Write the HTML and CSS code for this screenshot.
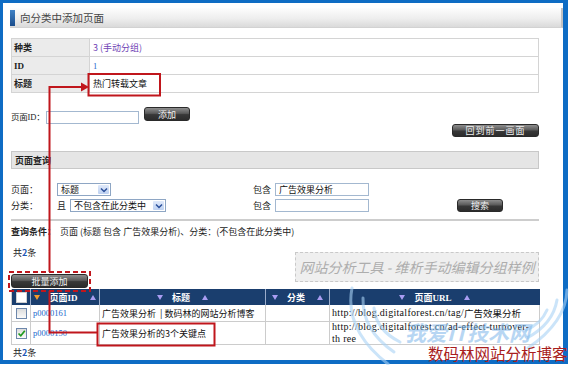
FILE: index.html
```html
<!DOCTYPE html>
<html lang="zh-CN">
<head>
<meta charset="utf-8">
<title>向分类中添加页面</title>
<link rel="stylesheet" href="styles.css">
</head>
<body>
<div class="frame">
  <div class="head"><span class="accent"></span><span class="head-title">向分类中添加页面</span></div>
  <div class="content">
    <div class="info">
      <div class="irow"><div class="lab">种类</div><div class="val purple">3 (手动分组)</div></div>
      <div class="irow"><div class="lab">ID</div><div class="val"><span class="link">1</span></div></div>
      <div class="irow"><div class="lab">标题</div><div class="val dark">热门转载文章</div></div>
    </div>

    <div class="idrow">
      <span class="idlabel">页面ID：</span>
      <span class="input idinput"></span>
      <span class="btn b-add">添加</span>
    </div>
    <div class="backrow"><span class="btn b-back">回到前一画面</span></div>

    <div class="section">页面查询</div>

    <div class="form">
      <span class="flabel">页面：</span>
      <span class="fcell"><span class="sel s1"><span class="seltext">标题</span><span class="arr"><svg width="8" height="6" viewBox="0 0 8 6"><path d="M1 1.5 L4 4.5 L7 1.5" fill="none" stroke="#2a4f9a" stroke-width="1.5"/></svg></span></span></span>
      <span class="flabel">包含</span>
      <span class="input"><span class="intext">广告效果分析</span></span>
      <span></span>
      <span></span>

      <span class="flabel">分类：</span>
      <span class="fcell"><span class="qie">且</span><span class="sel s2"><span class="seltext">不包含在此分类中</span><span class="arr"><svg width="8" height="6" viewBox="0 0 8 6"><path d="M1 1.5 L4 4.5 L7 1.5" fill="none" stroke="#2a4f9a" stroke-width="1.5"/></svg></span></span></span>
      <span class="flabel">包含</span>
      <span class="input"></span>
      <span></span>
      <span class="btn b-search">搜索</span>
    </div>

    <div class="sep"></div>

    <div class="cond"><b>查询条件：</b>&nbsp; 页面 (标题 包含 广告效果分析)、分类：(不包含在此分类中)</div>

    <div class="countrow">
      <div class="leftcol">
        <div class="count">共<b>2</b>条</div>
        <span class="btn b-bulk">批量添加</span>
      </div>
      <div class="sample">网站分析工具 - 维析手动编辑分组样例</div>
    </div>

    <div class="list">
      <div class="hc"><span class="cb white"></span></div>
      <div class="hc"><span class="g"><span class="dn org"></span><span>页面ID</span><span class="up"></span></span></div>
      <div class="hc"><span class="g"><span class="dn"></span><span>标题</span><span class="up"></span></span></div>
      <div class="hc"><span class="g"><span class="dn"></span><span>分类</span><span class="up"></span></span></div>
      <div class="hc last"><span class="g"><span class="dn"></span><span>页面URL</span><span class="up"></span></span></div>

      <div class="bc c"><span class="cb"></span></div>
      <div class="bc"><span class="link">p0000161</span></div>
      <div class="bc">广告效果分析 &nbsp;| 数码林的网站分析博客</div>
      <div class="bc"></div>
      <div class="bc url">http://blog.digitalforest.cn/tag/<span class="cjk">广告效果分析</span></div>

      <div class="bc c"><span class="cb checked"><svg width="9" height="9" viewBox="0 0 9 9"><path d="M1.5 4.5 L3.8 6.8 L7.8 1.8" fill="none" stroke="#1f9a1f" stroke-width="1.7"/></svg></span></div>
      <div class="bc"><span class="link">p0000150</span></div>
      <div class="bc">广告效果分析的3个关键点</div>
      <div class="bc"></div>
      <div class="bc url two">http://blog.digitalforest.cn/ad-effect-turnover-<br>th ree</div>
    </div>

    <div class="count bottom">共<b>2</b>条</div>
  </div>
</div>

<svg class="overlay" width="572" height="365" viewBox="0 0 572 365">
  <g fill="none" stroke="#a9d3f6" stroke-width="3" stroke-linecap="round" opacity="0.6">
    <path d="M352 288 Q344 330 388 364"/>
    <path d="M363 298 Q362 330 394 352"/>
    <path d="M374 308 Q376 330 400 342"/>
    <path d="M567 290 Q566 322 528 348"/>
    <path d="M557 300 Q553 324 527 338"/>
    <path d="M547 310 Q541 324 526 330"/>
  </g>
  <text x="405" y="341" class="wm-blue">我爱IT技术网</text>
  <g fill="none" stroke="#c0161c" stroke-width="2">
    <path d="M49.5 272 V87 H82"/>
    <path d="M49.5 291 V332.5 H97"/>
    <rect x="88.5" y="74" width="71.5" height="21.5"/>
    <rect x="97.5" y="323.5" width="117" height="22"/>
    <rect x="9" y="272" width="81" height="19" stroke-dasharray="5 3"/>
  </g>
  <polygon points="81,82.5 89,87 81,91.5" fill="#c0161c"/>
  <text x="428" y="360" class="wm-red">数码林网站分析博客</text>
</svg>
</body>
</html>
```

FILE: styles.css
```css
html, body {
  margin: 0;
  padding: 0;
}
body {
  width: 572px;
  height: 365px;
  overflow: hidden;
  background: #fff;
  position: relative;
  font-family: "Noto Sans CJK SC", "Liberation Sans", sans-serif;
  font-size: 9px;
  color: #222;
}

.frame {
  width: 560px;
  height: 357px;
  border: 3px solid #0e6cc4;
  border-right-width: 5px;
  border-bottom-width: 4px;
}

.head {
  margin: 5px 0 0 7px;
  height: 19px;
  background: linear-gradient(#fdfdfd, #eeeeee 55%, #dadada);
  border-bottom: 1px solid #d2d2d2;
  border-right: 2px solid #c2c2c2;
  display: flex;
  align-items: center;
}
.accent {
  width: 5px;
  height: 16px;
  background: linear-gradient(#3f82c6, #1b4d8c);
  margin-right: 5px;
}
.head-title {
  font-size: 10.5px;
  line-height: 12px;
  color: #444;
}

.content {
  margin-left: 8px;
  width: 528px;
}

/* info table */
.info {
  margin-top: 10px;
  border: 1px solid #d4d4d4;
  border-bottom: none;
}
.irow {
  display: grid;
  grid-template-columns: 78px 1fr;
  height: 18px;
  box-sizing: border-box;
  border-bottom: 1px solid #d4d4d4;
}
.lab {
  background: #ebebeb;
  border-right: 1px solid #d4d4d4;
  font-weight: bold;
  padding-left: 2px;
  display: flex;
  align-items: center;
  color: #222;
  font-family: "Liberation Serif", "Noto Sans CJK SC", serif;
}
.val {
  padding-left: 3px;
  display: flex;
  align-items: center;
}
.purple { color: #6f43b5; }
.dark { color: #111; }
.link {
  color: #2166cc;
  font-family: "Liberation Serif", serif;
  font-size: 8.5px;
}

/* page id row */
.idrow {
  margin-top: 14px;
  height: 17px;
  display: flex;
  align-items: flex-start;
}
.idlabel {
  width: 35px;
  flex-shrink: 0;
  white-space: nowrap;
  margin-top: 4px;
  line-height: 12px;
  font-size: 8.5px;
  letter-spacing: -0.2px;
  font-family: "Liberation Serif", "Noto Sans CJK SC", serif;
}
.input {
  box-sizing: border-box;
  height: 13px;
  border: 1px solid #a3b8d0;
  background: #fff;
  display: flex;
  align-items: center;
}
.idinput {
  width: 93px;
  flex-shrink: 0;
  margin-top: 4px;
}
.intext {
  padding-left: 3px;
  line-height: 11px;
  color: #111;
}

.btn {
  box-sizing: border-box;
  display: flex;
  align-items: center;
  justify-content: center;
  color: #f2f2f2;
  font-size: 9px;
  border-radius: 3px;
  border: 1px solid #2a2a2a;
  background: linear-gradient(#8e8e8e, #5a5a5a 45%, #383838 55%, #2c2c2c);
}
.b-add {
  width: 46px;
  height: 14px;
  margin-left: 5px;
}
.backrow {
  display: flex;
  justify-content: flex-end;
}
.b-back {
  width: 87px;
  height: 13px;
  letter-spacing: 1px;
}

.section {
  margin-top: 14px;
  height: 18px;
  box-sizing: border-box;
  border: 1px solid #c8c8c8;
  background: #e5e5e5;
  font-weight: bold;
  padding-left: 3px;
  display: flex;
  align-items: center;
  color: #222;
}

/* form */
.form {
  margin-top: 14px;
  display: grid;
  grid-template-columns: 46px 196px 22px 94px 88px 46px;
  grid-auto-rows: 13px;
  row-gap: 3px;
  align-items: center;
}
.flabel {
  line-height: 12px;
}
.fcell {
  display: flex;
  align-items: center;
}
.qie {
  width: 13px;
}
.sel {
  box-sizing: border-box;
  height: 13px;
  border: 1px solid #8ea6c4;
  display: flex;
  align-items: center;
  justify-content: space-between;
  padding: 0 1px 0 3px;
  background: #fff;
}
.s1 { width: 54px; }
.s2 { width: 96px; }
.seltext {
  line-height: 11px;
  color: #111;
}
.arr {
  width: 11px;
  height: 9px;
  background: linear-gradient(#dfe9fa, #bed1f1);
  border-radius: 1px;
  display: flex;
  align-items: center;
  justify-content: center;
}
.b-search {
  width: 46px;
  height: 13px;
}

.sep {
  margin-top: 7px;
  height: 2px;
  background: #cdcdcd;
}

.cond {
  margin-top: 5px;
  height: 12px;
  line-height: 12px;
  color: #222;
}
.cond b { font-weight: bold; }

.countrow {
  margin-top: 9px;
  height: 42px;
  display: flex;
  justify-content: space-between;
  align-items: flex-start;
}
.leftcol {
  display: flex;
  flex-direction: column;
}
.count {
  line-height: 12px;
  height: 12px;
  padding-left: 2px;
}
.count b {
  color: #1b56b4;
  font-weight: bold;
}
.b-bulk {
  margin-top: 15px;
  width: 77px;
  height: 14px;
}
.sample {
  margin-top: 5px;
  width: 244px;
  height: 30px;
  box-sizing: border-box;
  border: 1px dashed #c9c9c9;
  background: #efefef;
  color: #adadad;
  font-size: 14px;
  font-style: italic;
  display: flex;
  align-items: center;
  justify-content: center;
}

/* list table */
.list {
  display: grid;
  grid-template-columns: 19px 69px 166px 64px 210px;
  grid-template-rows: 16px 17px 23px;
  border-left: 1px solid #cccccc;
  box-sizing: border-box;
  width: 528px;
}
.hc {
  background: #1a3e6e;
  color: #fff;
  font-weight: bold;
  display: flex;
  align-items: center;
  justify-content: center;
  border-right: 1px solid #9aaccb;
  font-family: "Liberation Serif", "Noto Sans CJK SC", serif;
  font-size: 9px;
}
.hc.last { border-right: 1px solid #1a3e6e; }
.g {
  display: flex;
  align-items: center;
}
.dn {
  width: 0;
  height: 0;
  border-left: 3px solid transparent;
  border-right: 3px solid transparent;
  border-top: 5px solid #a99df2;
  margin-right: 9px;
}
.dn.org { border-top-color: #f39a2b; }
.up {
  width: 0;
  height: 0;
  border-left: 3px solid transparent;
  border-right: 3px solid transparent;
  border-bottom: 5px solid #a99df2;
  margin-left: 12px;
}
.bc {
  border-right: 1px solid #cccccc;
  border-bottom: 1px solid #cccccc;
  display: flex;
  align-items: center;
  padding-left: 2px;
  color: #111;
  overflow: hidden;
  white-space: nowrap;
}
.bc.c {
  padding-left: 0;
  justify-content: center;
}
.cb {
  box-sizing: border-box;
  width: 11px;
  height: 11px;
  border: 1px solid #6d87ab;
  background: linear-gradient(#dcdcdc, #fbfbfb);
  display: flex;
  align-items: center;
  justify-content: center;
}
.cb.white {
  background: #fff;
  border-color: #d0d0d0;
}
.url {
  font-family: "Liberation Serif", serif;
  font-size: 10px;
  letter-spacing: 0.3px;
  line-height: 12px;
}
.url .cjk {
  font-family: "Noto Sans CJK SC", sans-serif;
  font-size: 9.5px;
  letter-spacing: 0;
}
.url.two {
  white-space: normal;
}

.count.bottom {
  margin-top: 2px;
}

/* overlay annotations */
.overlay {
  position: absolute;
  left: 0;
  top: 0;
  pointer-events: none;
}
.wm-blue {
  font-family: "Noto Sans CJK SC", sans-serif;
  font-size: 21px;
  font-weight: bold;
  font-style: italic;
  fill: #7db6ea;
  opacity: 0.55;
}
.wm-red {
  font-family: "Noto Sans CJK SC", sans-serif;
  font-size: 15.5px;
  fill: #a81d1d;
}
```
